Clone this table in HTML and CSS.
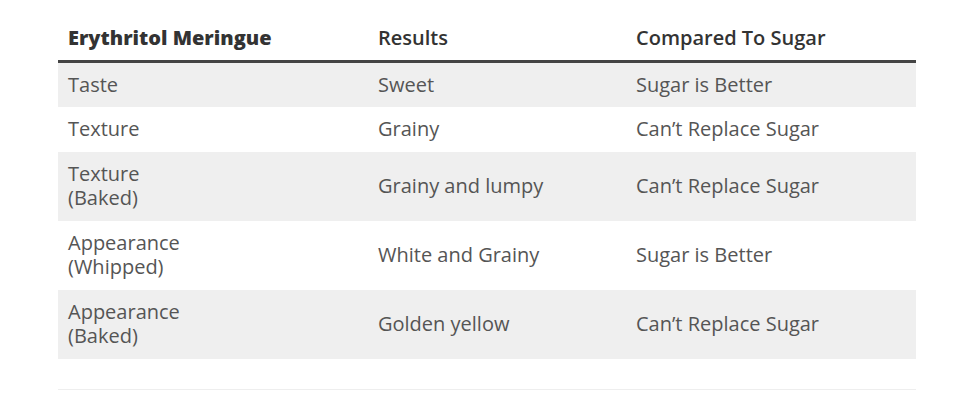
FILE: index.html
```html
<!DOCTYPE html>
<html>
<head>
<meta charset="utf-8">
<link rel="stylesheet" href="styles.css">
</head>
<body>
<div class="wrap">
  <table class="cmp">
    <colgroup>
      <col class="c1"><col class="c2"><col class="c3">
    </colgroup>
    <thead>
      <tr><th class="first">Erythritol Meringue</th><th>Results</th><th>Compared To Sugar</th></tr>
    </thead>
    <tbody>
      <tr class="odd"><td>Taste</td><td>Sweet</td><td>Sugar is Better</td></tr>
      <tr><td>Texture</td><td>Grainy</td><td>Can’t Replace Sugar</td></tr>
      <tr class="odd"><td>Texture<br>(Baked)</td><td>Grainy and lumpy</td><td>Can’t Replace Sugar</td></tr>
      <tr><td>Appearance<br>(Whipped)</td><td>White and Grainy</td><td>Sugar is Better</td></tr>
      <tr class="odd"><td>Appearance<br>(Baked)</td><td>Golden yellow</td><td>Can’t Replace Sugar</td></tr>
    </tbody>
  </table>
</div>
</body>
</html>
```
FILE: styles.css
```css
html, body { margin: 0; padding: 0; background: #fff; }
body { font-family: "Open Sans", "Liberation Sans", sans-serif; }
.wrap {
  margin: 0 55px 0 58px;
  padding-top: 16px;
  padding-bottom: 30px;
  border-bottom: 1px solid #eeeeee;
}
.cmp {
  width: 100%;
  border-collapse: collapse;
  table-layout: fixed;
  font-size: 20px;
  line-height: 24.5px;
  color: #555;
}
.c1 { width: 310px; }
.c2 { width: 258px; }
.c3 { width: 290px; }
.cmp th {
  text-align: left;
  font-weight: 600;
  color: #333;
  padding: 10px 10px 9px 10px;
  border-bottom: 3px solid #444;
}
.cmp th.first { font-weight: 800; }
.cmp td {
  padding: 10px 10px;
  vertical-align: middle;
}
.cmp tr.odd td { background: #efefef; }
```
